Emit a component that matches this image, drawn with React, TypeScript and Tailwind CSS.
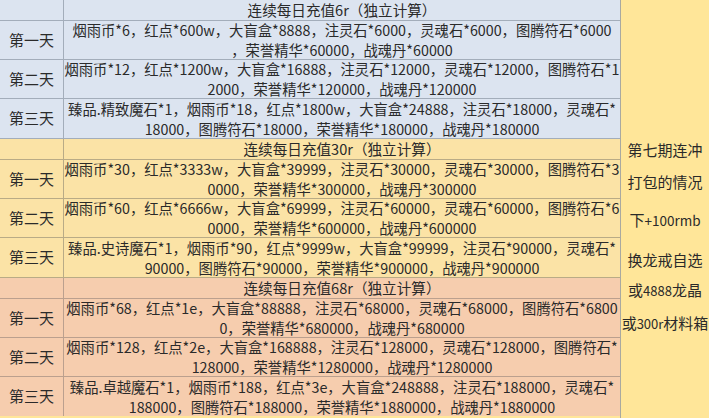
import React from "react";

type Section = {
  title: string;
  bg: string;
  line: string;
  rows: [string, string][];
};

const days = ["第一天", "第二天", "第三天"];

const sections: Section[] = [
  {
    title: "连续每日充值6r（独立计算）",
    bg: "bg-[#dce4f0]",
    line: "border-[#a3adba]",
    rows: [
      ["烟雨币*6，红点*600w，大盲盒*8888，注灵石*6000，灵魂石*6000，图腾符石*6000", "，荣誉精华*60000，战魂丹*60000"],
      ["烟雨币*12，红点*1200w，大盲盒*16888，注灵石*12000，灵魂石*12000，图腾符石*1", "2000，荣誉精华*120000，战魂丹*120000"],
      ["臻品.精致魔石*1，烟雨币*18，红点*1800w，大盲盒*24888，注灵石*18000，灵魂石*", "18000，图腾符石*18000，荣誉精华*180000，战魂丹*180000"],
    ],
  },
  {
    title: "连续每日充值30r（独立计算）",
    bg: "bg-[#fbe3a6]",
    line: "border-[#b9ab86]",
    rows: [
      ["烟雨币*30，红点*3333w，大盲盒*39999，注灵石*30000，灵魂石*30000，图腾符石*3", "0000，荣誉精华*300000，战魂丹*300000"],
      ["烟雨币*60，红点*6666w，大盲盒*69999，注灵石*60000，灵魂石*60000，图腾符石*6", "0000，荣誉精华*600000，战魂丹*600000"],
      ["臻品.史诗魔石*1，烟雨币*90，红点*9999w，大盲盒*99999，注灵石*90000，灵魂石*", "90000，图腾符石*90000，荣誉精华*900000，战魂丹*900000"],
    ],
  },
  {
    title: "连续每日充值68r（独立计算）",
    bg: "bg-[#f6cdae]",
    line: "border-[#bba08e]",
    rows: [
      ["烟雨币*68，红点*1e，大盲盒*88888，注灵石*68000，灵魂石*68000，图腾符石*6800", "0，荣誉精华*680000，战魂丹*680000"],
      ["烟雨币*128，红点*2e，大盲盒*168888，注灵石*128000，灵魂石*128000，图腾符石*", "128000，荣誉精华*1280000，战魂丹*1280000"],
      ["臻品.卓越魔石*1，烟雨币*188，红点*3e，大盲盒*248888，注灵石*188000，灵魂石*", "188000，图腾符石*188000，荣誉精华*1880000，战魂丹*1880000"],
    ],
  },
];

function SectionBlock({ s, last }: { s: Section; last: boolean }) {
  return (
    <div className={`${s.bg} ${last ? "" : "border-b"} ${s.line}`}>
      {/* 标题行 */}
      <div className={`flex h-[21px] border-b ${s.line}`}>
        <div className={`w-[64px] shrink-0 border-r ${s.line}`} />
        <div className="flex-1 text-center text-[14.6px] leading-[20px]">{s.title}</div>
      </div>
      {s.rows.map((r, i) => (
        <div
          key={i}
          className={`flex h-[39px] ${i < 2 ? "border-b" : ""} ${s.line}`}
        >
          <div
            className={`w-[64px] shrink-0 border-r ${s.line} flex items-center justify-center`}
          >
            {days[i]}
          </div>
          <div className="flex-1 flex flex-col justify-center text-center text-[14.3px] leading-[20px] whitespace-nowrap">
            <div>{r[0]}</div>
            <div>{r[1]}</div>
          </div>
        </div>
      ))}
    </div>
  );
}

export default function App() {
  return (
    <div
      className="flex w-[709px] h-[418px] overflow-hidden text-[15px] text-[#2a2a2a] bg-[#ffe699]"
      style={{ fontFamily: '"Noto Sans CJK SC", sans-serif' }}
    >
      <div className="w-[621px] shrink-0 border-r border-[#a9a9a0] flex flex-col">
        {sections.map((s, i) => (
          <SectionBlock key={i} s={s} last={i === sections.length - 1} />
        ))}
      </div>
      <div className="flex-1 flex flex-col items-center pt-[140px] leading-[20px] whitespace-nowrap">
        <div>第七期连冲</div>
        <div className="mt-[12px]">打包的情况</div>
        <div className="mt-[18px]">
          下<span className="text-[13.5px]">+100rmb</span>
        </div>
        <div className="mt-[20px]">换龙戒自选</div>
        <div className="mt-[10px]">
          或<span className="text-[13px]">4888</span>龙晶
        </div>
        <div className="mt-[12px]">
          或<span className="text-[13px]">300r</span>材料箱
        </div>
      </div>
    </div>
  );
}
